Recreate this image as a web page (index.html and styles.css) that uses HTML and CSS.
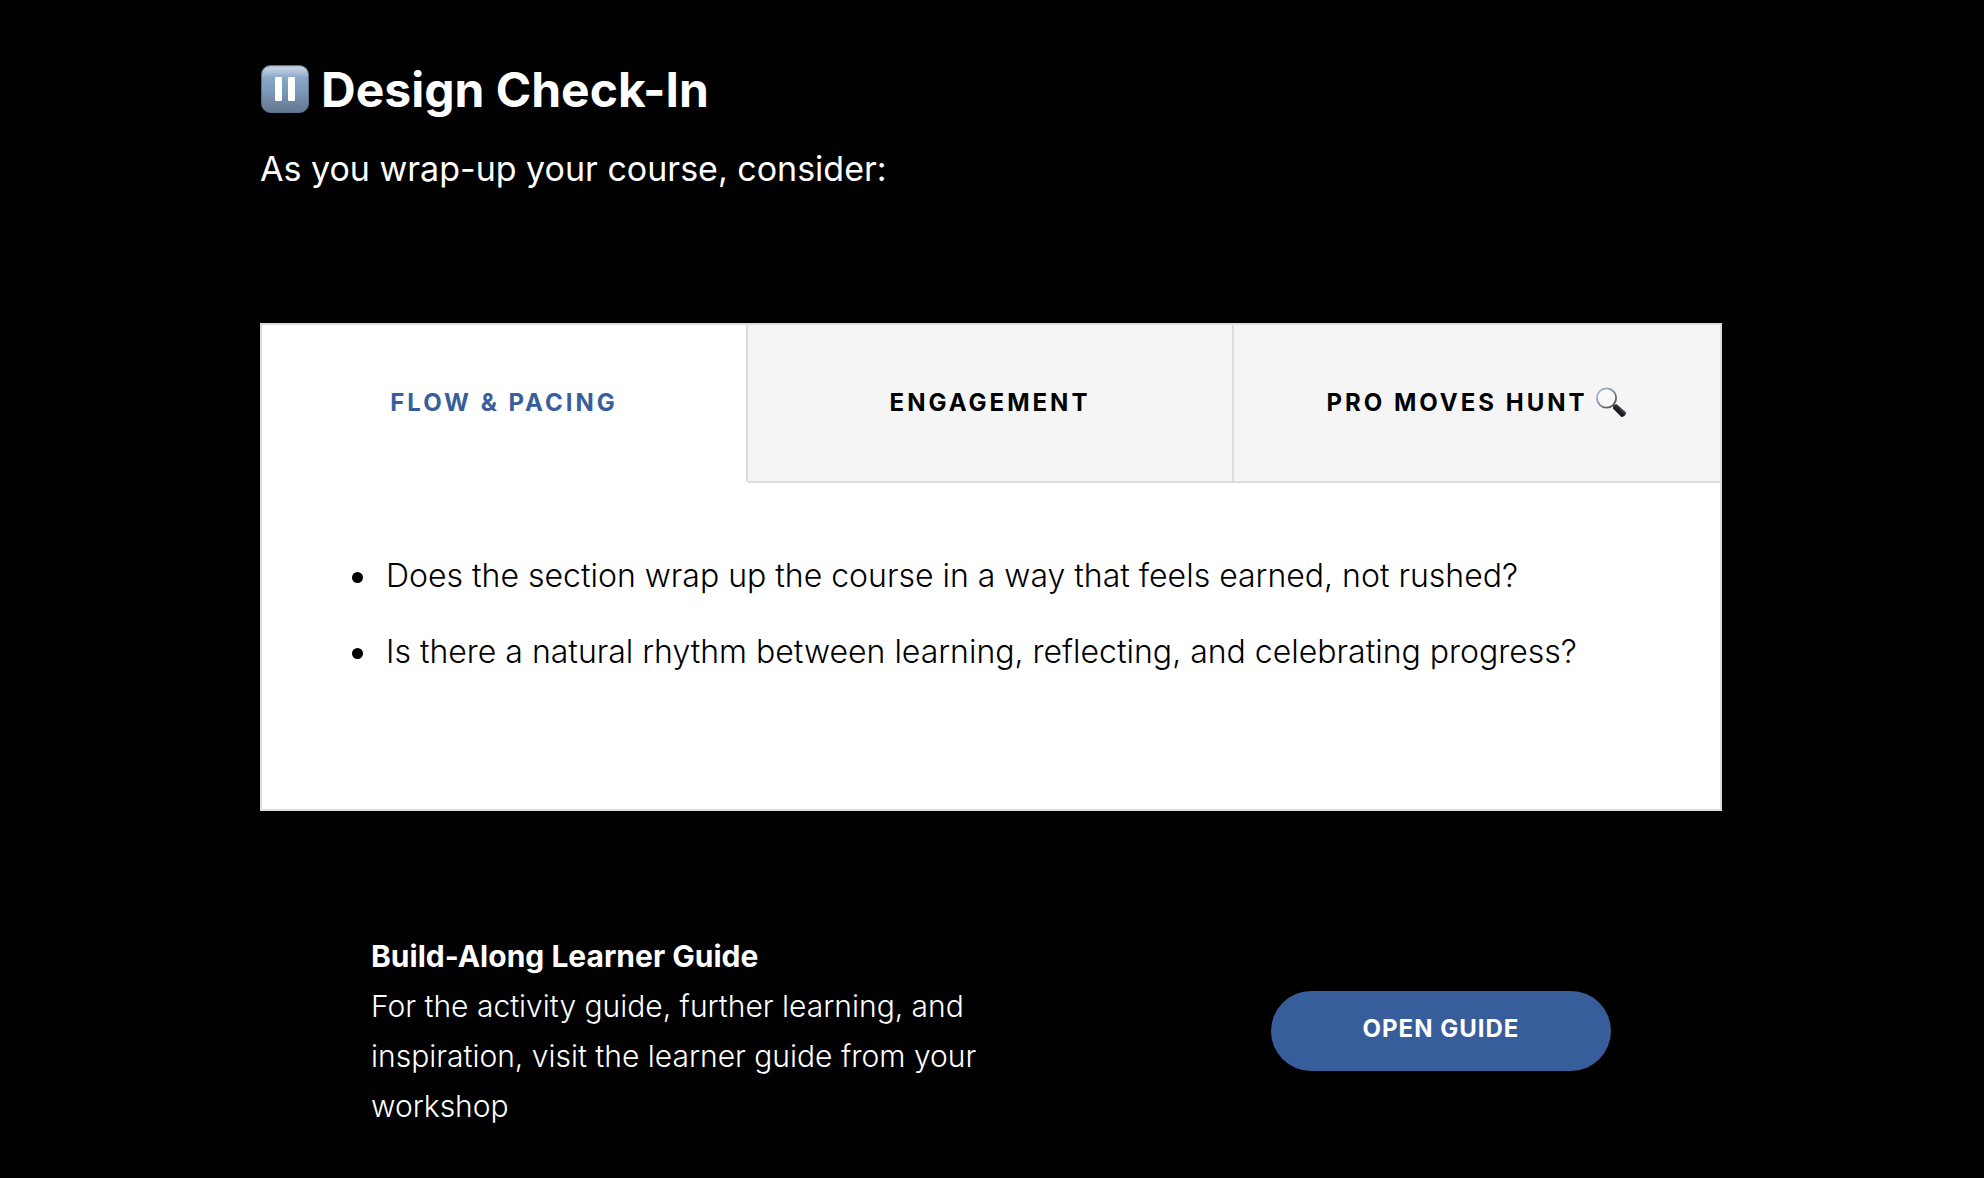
FILE: index.html
```html
<!DOCTYPE html>
<html lang="en">
<head>
    <meta charset="UTF-8">
    <meta name="viewport" content="width=device-width, initial-scale=1.0">
    <title>Design Check-In</title>
    <link rel="stylesheet" href="styles.css">
</head>
<body>
    <main class="page">
        <header class="intro">
            <h1 class="intro-title">
                <svg class="pause-icon" viewBox="0 0 50 50" aria-hidden="true">
                    <defs>
                        <linearGradient id="pauseFill" x1="0" y1="0" x2="0" y2="1">
                            <stop offset="0" stop-color="#a9bed3"/>
                            <stop offset="0.06" stop-color="#c3d2e1"/>
                            <stop offset="0.27" stop-color="#88a6c6"/>
                            <stop offset="0.5" stop-color="#7f9bbc"/>
                            <stop offset="1" stop-color="#64768f"/>
                        </linearGradient>
                    </defs>
                    <rect x="1.5" y="0.5" width="47" height="47" rx="9" fill="url(#pauseFill)" stroke="#56728f"/>
                    <rect x="15" y="12" width="7" height="24" rx="1" fill="#fff"/>
                    <rect x="28" y="12" width="7" height="24" rx="1" fill="#fff"/>
                </svg>
                Design Check-In
            </h1>
            <p class="intro-text">As you wrap-up your course, consider:</p>
        </header>

        <section class="tabs">
            <div class="tab-list" role="tablist">
                <button class="tab active" id="tab-flow" role="tab" aria-selected="true" aria-controls="panel-flow">FLOW &amp; PACING</button>
                <button class="tab" role="tab" aria-selected="false">ENGAGEMENT</button>
                <button class="tab" role="tab" aria-selected="false">
                    PRO MOVES HUNT
                    <svg class="search-icon" viewBox="0 0 32 32" aria-hidden="true">
                        <defs>
                            <linearGradient id="rimFill" x1="0" y1="0" x2="1" y2="1">
                                <stop offset="0" stop-color="#a9c0e0"/>
                                <stop offset="0.5" stop-color="#858c95"/>
                                <stop offset="1" stop-color="#3a3d42"/>
                            </linearGradient>
                            <linearGradient id="handleFill" x1="0" y1="1" x2="1" y2="0">
                                <stop offset="0.2" stop-color="#08090a"/>
                                <stop offset="0.55" stop-color="#25282c"/>
                                <stop offset="0.8" stop-color="#777c83"/>
                            </linearGradient>
                        </defs>
                        <path d="M17 19l3 3" stroke="#55595e" stroke-width="2"/>
                        <circle cx="10.5" cy="12" r="9.6" fill="#f9f9fa" stroke="url(#rimFill)" stroke-width="1.8"/>
                        <path d="M17 22.5q-.3-1.7 1.2-3.1 1.5-1.4 3-.9l8.6 7.7q.9 1.400-1 3.400-2 2-3.400 1.300z" fill="url(#handleFill)"/>
                    </svg>
                </button>
            </div>
            <div class="tab-panel" id="panel-flow" role="tabpanel" aria-labelledby="tab-flow">
                <ul class="questions">
                    <li>Does the section wrap up the course in a way that feels earned, not rushed?</li>
                    <li>Is there a natural rhythm between learning, reflecting, and celebrating progress?</li>
                </ul>
            </div>
        </section>

        <section class="guide">
            <div class="guide-text">
                <h2>Build-Along Learner Guide</h2>
                <p>For the activity guide, further learning, and inspiration, visit the learner guide from your workshop</p>
            </div>
            <button class="guide-button">OPEN GUIDE</button>
        </section>
    </main>
</body>
</html>
```
FILE: styles.css
```css
* {
    box-sizing: border-box;
}
body {
    margin: 0;
    background-color: #000;
    color: #fff;
    font-family: Inter, sans-serif;
}
h1, h2, p, ul {
    margin: 0;
}
button {
    border: none;
    font-family: inherit;
    font-size: 24px;
    cursor: pointer;
}
.page {
    padding: 58px 262px 46px 260px;
}

/* heading */
.intro-title {
    display: flex;
    align-items: center;
    gap: 11px;
    font-size: 48px;
    line-height: 64px;
    font-weight: 700;
}
.pause-icon {
    width: 50px;
    height: 50px;
}
.intro-text {
    margin-top: 20px;
    font-size: 34px;
    line-height: 54px;
    font-weight: 400;
}

/* tabs */
.tabs {
    margin-top: 127px;
    border: 2px solid #dcdcdc;
    background-color: #fff;
    color: #000;
}
.tab-list {
    display: grid;
    grid-template-columns: repeat(3, 1fr);
}
.tab {
    display: flex;
    align-items: center;
    justify-content: center;
    gap: 8px;
    height: 158px;
    padding: 0 0 2px;
    border-right: 2px solid #dcdcdc;
    border-bottom: 2px solid #dcdcdc;
    background-color: #f5f5f5;
    color: #000;
    font-weight: 700;
    letter-spacing: 3px;
}
.tab:last-child {
    border-right: none;
}
.tab.active {
    border-bottom-color: #fff;
    background-color: #fff;
    color: #375e9b;
}
.search-icon {
    width: 32px;
    height: 32px;
}
.tab-panel {
    padding: 68px 90px 132px;
}
.questions {
    padding: 0;
    list-style: none;
    font-size: 32px;
    line-height: 50px;
    font-weight: 300;
}
.questions li {
    display: flex;
    gap: 23px;
}
.questions li::before {
    content: "";
    flex: none;
    width: 11px;
    height: 11px;
    margin-top: 21px;
    border-radius: 50%;
    background-color: #000;
}
.questions li + li {
    margin-top: 26px;
}

/* learner guide */
.guide {
    display: flex;
    align-items: center;
    justify-content: space-between;
    margin-top: 120px;
    padding: 0 111px;
}
.guide-text {
    max-width: 640px;
    font-size: 30px;
    line-height: 50px;
    font-weight: 300;
}
.guide-text h2 {
    font-size: 30px;
    font-weight: 700;
}
.guide-button {
    width: 340px;
    height: 80px;
    padding: 0 0 6px;
    border-radius: 40px;
    background-color: #375e9b;
    color: #fff;
    font-weight: 700;
    letter-spacing: 1px;
}
```
